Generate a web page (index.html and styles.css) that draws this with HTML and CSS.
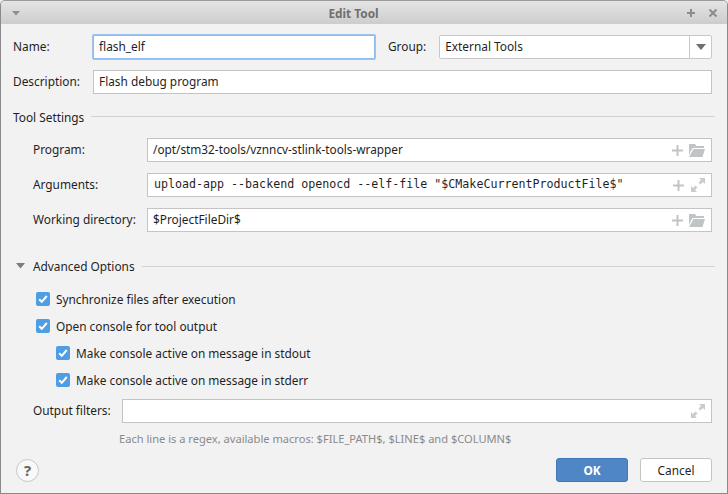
FILE: index.html
```html
<!DOCTYPE html>
<html lang="en">
<head>
    <meta charset="UTF-8">
    <title>Edit Tool</title>
    <link rel="stylesheet" href="styles.css">
</head>
<body>
    <div class="window">
        <div class="titlebar">
            <svg class="menu-arrow" width="10" height="6" viewBox="0 0 10 6"><path d="M1 1h8L5 5.500z" fill="#8f8f8f"/></svg>
            <span class="title">Edit Tool</span>
            <svg class="win-btn" width="10" height="10" viewBox="0 0 10 10"><path d="M1 5h8M5 1v8" stroke="#8c8c8c" stroke-width="2"/></svg>
            <svg class="win-btn close" width="10" height="10" viewBox="0 0 10 10"><path d="M1.500 1.500l7 7M8.500 1.500l-7 7" stroke="#8c8c8c" stroke-width="2"/></svg>
        </div>

        <div class="content">
            <div class="row row-name">
                <label class="lbl-top">Name:</label>
                <div class="field focused name-field">flash_elf</div>
                <label class="lbl-group">Group:</label>
                <div class="combo">
                    <span class="combo-text">External Tools</span>
                    <span class="combo-btn"><svg width="10" height="6" viewBox="0 0 10 6"><path d="M0 0h10L5 6z" fill="#6e6e6e"/></svg></span>
                </div>
            </div>
            <div class="row row-desc">
                <label class="lbl-top">Description:</label>
                <div class="field grow">Flash debug program</div>
            </div>

            <div class="section section-tool"><span class="section-label">Tool Settings</span><i class="rule"></i></div>

            <div class="row row-setting first">
                <label class="lbl-setting">Program:</label>
                <div class="field grow with-icons">
                    <span class="value path">/opt/stm32-tools/vznncv-stlink-tools-wrapper</span>
                    <svg class="ico" width="11" height="11" viewBox="0 0 11 11"><path d="M0 5.500h11M5.500 0v11" stroke="#c0c4c6" stroke-width="2"/></svg>
                    <svg class="ico folder" width="16" height="13" viewBox="0 0 16 13"><path d="M0 0h6l1.500 2H15v2H4L2 6.500 0 11z" fill="#c0c4c6"/><path d="M4.500 5H16l-2.500 8H0z" fill="#c0c4c6"/></svg>
                </div>
            </div>
            <div class="row row-setting">
                <label class="lbl-setting">Arguments:</label>
                <div class="field grow with-icons">
                    <span class="value mono">upload-app --backend openocd --elf-file "$CMakeCurrentProductFile$"</span>
                    <svg class="ico" width="11" height="11" viewBox="0 0 11 11"><path d="M0 5.500h11M5.500 0v11" stroke="#c0c4c6" stroke-width="2"/></svg>
                    <svg class="ico expand" width="14" height="14" viewBox="0 0 14 14"><path d="M8 0h6v6l-2-2-2.500 2.500-2-2L10 2zM6 14H0V8l2 2 2.500-2.500 2 2L4 12z" fill="#c9cccd"/></svg>
                </div>
            </div>
            <div class="row row-setting">
                <label class="lbl-setting">Working directory:</label>
                <div class="field grow with-icons">
                    <span class="value">$ProjectFileDir$</span>
                    <svg class="ico" width="11" height="11" viewBox="0 0 11 11"><path d="M0 5.500h11M5.500 0v11" stroke="#c0c4c6" stroke-width="2"/></svg>
                    <svg class="ico folder" width="16" height="13" viewBox="0 0 16 13"><path d="M0 0h6l1.500 2H15v2H4L2 6.500 0 11z" fill="#c0c4c6"/><path d="M4.500 5H16l-2.500 8H0z" fill="#c0c4c6"/></svg>
                </div>
            </div>

            <div class="section section-adv">
                <svg class="adv-arrow" width="10" height="6" viewBox="0 0 10 6"><path d="M0 0h9L4.500 5.500z" fill="#7d7d7d"/></svg>
                <span>Advanced Options</span><i class="rule"></i>
            </div>

            <div class="checks">
                <div class="check"><span class="box"><svg width="14" height="14" viewBox="0 0 14 14"><path d="M3.200 7.200l2.600 2.600 5-5.800" fill="none" stroke="#fff" stroke-width="2"/></svg></span>Synchronize files after execution</div>
                <div class="check"><span class="box"><svg width="14" height="14" viewBox="0 0 14 14"><path d="M3.200 7.200l2.600 2.600 5-5.800" fill="none" stroke="#fff" stroke-width="2"/></svg></span>Open console for tool output</div>
                <div class="check nested"><span class="box"><svg width="14" height="14" viewBox="0 0 14 14"><path d="M3.200 7.200l2.600 2.600 5-5.800" fill="none" stroke="#fff" stroke-width="2"/></svg></span>Make console active on message in stdout</div>
                <div class="check nested"><span class="box"><svg width="14" height="14" viewBox="0 0 14 14"><path d="M3.200 7.200l2.600 2.600 5-5.800" fill="none" stroke="#fff" stroke-width="2"/></svg></span>Make console active on message in stderr</div>
            </div>

            <div class="row row-output">
                <label class="lbl-output">Output filters:</label>
                <div class="field grow with-icons">
                    <span class="value"></span>
                    <svg class="ico expand" width="14" height="14" viewBox="0 0 14 14"><path d="M8 0h6v6l-2-2-2.500 2.500-2-2L10 2zM6 14H0V8l2 2 2.500-2.500 2 2L4 12z" fill="#c9cccd"/></svg>
                </div>
            </div>
            <div class="hint">Each line is a regex, available macros: $FILE_PATH$, $LINE$ and $COLUMN$</div>

            <div class="footer">
                <span class="help">?</span>
                <span class="btn primary">OK</span>
                <span class="btn">Cancel</span>
            </div>
        </div>
    </div>
</body>
</html>
```

FILE: styles.css
```css
* { box-sizing: border-box; }
html, body { margin: 0; height: 100%; background: #f2f2f2; }
body { font-family: "Noto Sans", sans-serif; font-size: 11.85px; color: #1f1f1f; overflow: hidden; }

.window { width: 728px; height: 494px; border: 1px solid #8a8a8a; border-top-color: #9a9a9a; border-radius: 5px 5px 0 0; display: flex; flex-direction: column; overflow: hidden; }
.titlebar { height: 23px; flex: none; display: flex; align-items: center; padding: 0 9px 0 10px; background: linear-gradient(#e4e4e4, #cdcdcd); }
.title { flex: 1; text-align: center; font-weight: bold; color: #6f6f6f; margin-left: 12px; }
.win-btn { margin-left: 12px; }

.content { padding: 11px 15px 11px 12px; flex: 1; display: flex; flex-direction: column; }
.row { display: flex; align-items: center; }
.row-name { height: 24px; }
.row-desc { height: 24px; margin-top: 11px; }
.row-setting { height: 24px; margin-top: 11px; padding-left: 20px; }
.row-setting.first { margin-top: 12px; }
.row-output { height: 24px; margin-top: 6px; padding-left: 20px; }

label { padding-bottom: 2px; }
.lbl-top { width: 80px; flex: none; }
.lbl-group { margin: 0 13px 0 13px; flex: none; }
.lbl-setting { width: 114px; flex: none; }
.lbl-output { width: 89px; flex: none; }

.field { height: 24px; background: #fff; border: 1px solid #c4c4c4; padding: 0 6px 2px 5px; display: flex; align-items: center; white-space: nowrap; }
.grow { flex: 1; min-width: 0; }
.name-field { width: 282px; flex: none; }
.focused { border-color: #8fbcee; box-shadow: 0 0 0 1px #9cc4ef; border-radius: 1px; }
.with-icons .value { flex: 1; }
.path { font-size: 11.8px; }
.mono { font-family: "DejaVu Sans Mono", monospace; font-size: 11.65px; padding-left: 1px; }
.ico { flex: none; margin: 2px 0 0 9px; }
.folder { margin-left: 6px; }
.expand { margin-left: 7px; }

.combo { flex: 1; height: 24px; display: flex; background: #fff; border: 1px solid #c8c8c8; border-radius: 2px; align-items: stretch; }
.combo-text { flex: 1; padding: 0 0 2px 5px; display: flex; align-items: center; }
.combo-btn { width: 22px; border-left: 1px solid #c8c8c8; display: flex; align-items: center; justify-content: center; }

.section { display: flex; align-items: center; height: 18px; }
.section .rule { flex: 1; height: 1px; background: #d2d2d2; margin-left: 7px; }
.section-label { margin-top: 2px; }
.section-tool { margin-top: 13px; margin-bottom: 1px; margin-right: -3px; }
.section-adv { margin-top: 25px; margin-bottom: 1px; margin-right: -3px; padding-left: 3px; }
.adv-arrow { margin-right: 7px; }

.checks { display: flex; flex-direction: column; margin-top: 9px; padding-left: 23px; }
.check { height: 27px; display: flex; align-items: center; }
.nested { padding-left: 20px; }
.box { width: 14px; height: 14px; background: #4f9ee3; border-radius: 2px; margin-right: 6px; flex: none; display: flex; }

.hint { margin-top: 8px; padding-left: 106px; font-size: 11.1px; color: #8a8a8a; height: 16px; line-height: 16px; }

.footer { display: flex; align-items: center; margin-top: 11px; }
.help { width: 23px; height: 23px; border-radius: 50%; border: 1px solid #c6c6c6; background: #f9f9f9; margin-left: 3px; margin-right: auto; display: flex; align-items: center; justify-content: center; font-weight: bold; font-size: 15px; color: #666; }
.btn { width: 72px; height: 24px; border: 1px solid #c4c4c4; border-radius: 3px; background: #fff; display: flex; align-items: center; justify-content: center; margin-left: 12px; }
.primary { background: #4f86c6; border-color: #3f76b6; color: #fff; font-weight: bold; }
```
